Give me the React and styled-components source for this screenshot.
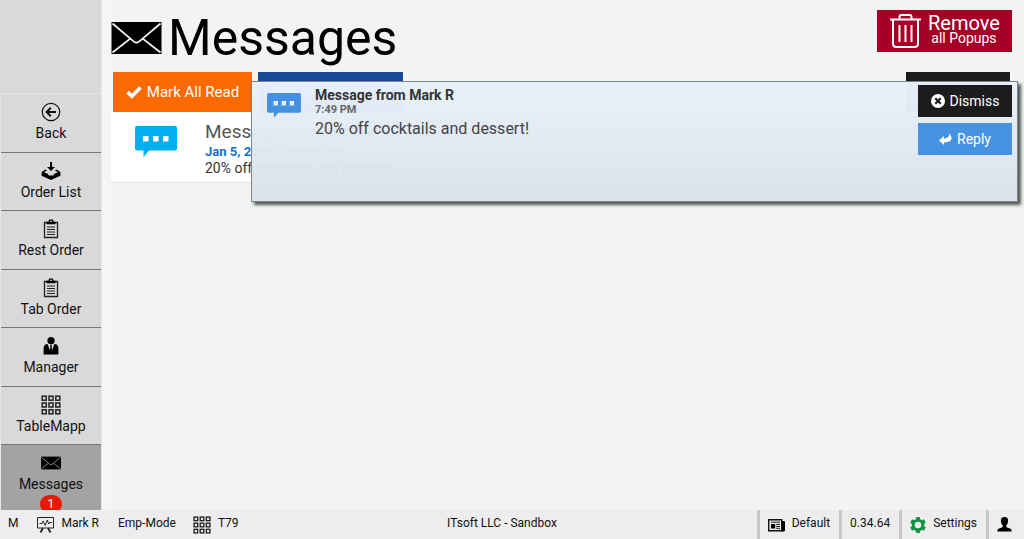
import React from 'react';
import styled, { createGlobalStyle } from 'styled-components';

const GlobalStyle = createGlobalStyle`
  * {
    box-sizing: border-box;
  }
  body {
    margin: 0;
    background: #f2f4f3;
    color: #111;
    font-family: Roboto, "Liberation Sans", sans-serif;
  }
  button {
    border: 0;
    padding: 0;
    font-family: inherit;
    cursor: pointer;
  }
`;

const Page = styled.div`
  display: grid;
  grid-template-columns: 102px minmax(0, 1fr);
  grid-template-rows: minmax(0, 1fr) 29px;
  height: 100vh;
  overflow: hidden;
`;

const Sidebar = styled.aside`
  display: grid;
  grid-template-rows: 93px minmax(0, 1fr);
  background: #d9d9d9;
  border-right: 1px solid #e6e6e6;
  overflow: hidden;
`;

const Nav = styled.nav`
  display: grid;
  grid-template-rows: repeat(6, minmax(0, 1fr)) 65px;
  border-top: 1px solid #e6e6e6;
  border-left: 1px solid #e6e6e6;
  overflow: hidden;
`;

const NavItem = styled.a`
  display: flex;
  flex-direction: column;
  align-items: center;
  gap: 2px;
  padding-top: 8px;
  border-bottom: 1px solid #777;
  color: #111;
  font-size: 14px;
  line-height: 18px;
  text-decoration: none;
  overflow: hidden;
  svg {
    flex: none;
  }
  ${({ $active }) => $active && `
    background: #a3a3a3;
    border-bottom: 0;
  `}
`;

const Badge = styled.span`
  flex: none;
  width: 22px;
  height: 18px;
  border-radius: 9px;
  background: #e8190a;
  color: #fff;
  font-size: 13px;
  line-height: 17px;
  text-align: center;
`;

const Main = styled.main`
  position: relative;
  padding: 10px 12px 0 9px;
  background: linear-gradient(90deg, #f5f6f6, #f2f4f3 12px);
`;

const Header = styled.header`
  display: flex;
  justify-content: space-between;
  align-items: flex-start;
  height: 62px;
`;

const Title = styled.h1`
  display: flex;
  align-items: center;
  gap: 6px;
  margin: 0;
  color: #000;
  font-size: 50px;
  font-weight: 400;
  line-height: 56px;
`;

const RemoveButton = styled.button`
  display: flex;
  align-items: center;
  gap: 7px;
  width: 135px;
  height: 42px;
  padding-left: 13px;
  background: #a50026;
  color: #fff;
`;

const RemoveLabel = styled.span`
  display: flex;
  flex-direction: column;
  align-items: center;
  padding-bottom: 6px;
  font-size: 14px;
  line-height: 10px;
`;

const RemoveTitle = styled.span`
  font-size: 20px;
  line-height: 20px;
`;

const Toolbar = styled.div`
  display: flex;
  gap: 6px;
  padding: 0 2px;
`;

const ToolButton = styled.button`
  display: flex;
  align-items: center;
  justify-content: center;
  gap: 5px;
  width: ${({ $width }) => $width}px;
  height: 40px;
  background: ${({ $color }) => $color};
  color: #fff;
  font-size: 15px;
  &:last-child {
    margin-left: auto;
  }
`;

const Card = styled.article`
  display: flex;
  gap: 28px;
  padding: 8px 24px 5px;
  background: #fff;
  border-bottom: 1px solid #e4e4e4;
  svg {
    margin-top: 6px;
  }
`;

const CardTitle = styled.h2`
  margin: 0;
  color: #555;
  font-size: 19px;
  font-weight: 400;
  line-height: 23px;
`;

const CardDate = styled.div`
  color: #1272ce;
  font-size: 13px;
  font-weight: 700;
  line-height: 17px;
`;

const CardText = styled.p`
  margin: 0;
  color: #333;
  font-size: 14px;
  line-height: 17px;
`;

const Popup = styled.section`
  position: absolute;
  top: 81px;
  right: 6px;
  left: 149px;
  display: flex;
  gap: 14px;
  min-height: 121px;
  padding: 3px 5px 0 15px;
  border: 1px solid #7c858a;
  background: linear-gradient(rgba(233, 242, 252, 0.98), rgba(217, 225, 234, 0.98));
  box-shadow: 3px 3px 3px rgba(0, 0, 0, 0.65);
  > svg {
    margin-top: 8px;
  }
`;

const PopupBody = styled.div`
  flex: 1;
  color: #444;
`;

const PopupTitle = styled.h3`
  margin: 2px 0 0;
  color: #333;
  font-size: 14px;
  line-height: 16px;
`;

const PopupTime = styled.div`
  color: #666;
  font-size: 11px;
  font-weight: 700;
  line-height: 14px;
`;

const PopupText = styled.p`
  margin: 0;
  font-size: 16px;
  line-height: 23px;
`;

const PopupActions = styled.div`
  display: flex;
  flex-direction: column;
  gap: 6px;
`;

const ActionButton = styled.button`
  display: flex;
  align-items: center;
  justify-content: center;
  gap: 5px;
  width: 94px;
  height: 32px;
  background: ${({ $color }) => $color};
  color: #fff;
  font-size: 14px;
`;

const StatusBar = styled.footer`
  grid-column: 1 / -1;
  display: flex;
  justify-content: space-between;
  background: #ededed;
  font-size: 12px;
  line-height: 27px;
`;

const StatusGroup = styled.div`
  display: flex;
  flex: ${({ $grow }) => ($grow ? '1 1 0' : 'none')};
  justify-content: ${({ $end }) => ($end ? 'flex-end' : 'flex-start')};
`;

const StatusTitle = styled(StatusGroup)`
  padding-right: 20px;
`;

const StatusItem = styled.span`
  display: flex;
  gap: 7px;
  padding-left: ${({ $left }) => $left || 0}px;
  white-space: nowrap;
  svg {
    align-self: center;
  }
`;

const StatusCell = styled(StatusItem)`
  padding: 0 9px 0 8px;
  border-left: 3px solid #c9c9c9;
  &:last-child {
    padding-right: 12px;
  }
`;

const BackIcon = () => (
  <svg width="20" height="20" viewBox="0 0 20 20" fill="none" stroke="#111">
    <circle cx="10" cy="10" r="8.7" strokeWidth="1.2" />
    <path d="M15 10H6M9.8 5.8 5.6 10l4.2 4.2" strokeWidth="2" />
  </svg>
);

const InboxIcon = () => (
  <svg width="20" height="20" viewBox="0 0 20 20">
    <path d="M9 1h2v5h3l-4 4-4-4h3z" />
    <path d="M4.6 8.4.6 11v3.7L10 19l9.4-4.3V11l-4-2.6-1.4 1 3 1.9-3.7 1.4-1.2 1.8H7.9l-1.2-1.8L3 11.3l3-1.9z" />
  </svg>
);

const ClipboardIcon = () => (
  <svg width="20" height="20" viewBox="0 0 20 20">
    <path d="M3.5 3.5h13v15h-13z" fill="none" stroke="#222" strokeWidth="1.3" />
    <path d="M5.5 5.3V2.8h2.2V1.6Q7.7.6 8.7.6h2.6q1 0 1 1v1.2h2.2v2.5zM9 1.8v1.3h2V1.8z" fillRule="evenodd" />
    <path d="M6 8h8M6 10.5h8M6 13h8M6 15.5h8" stroke="#222" />
  </svg>
);

const ManagerIcon = () => (
  <svg width="20" height="20" viewBox="0 0 20 20">
    <circle cx="10" cy="4.7" r="3.6" />
    <path d="M2.6 18.5v-5.8Q2.6 8 6.6 8L9 14.5 9.4 10 8.9 8.8h2.2l-.5 1.2.4 4.5L13.4 8q4 0 4 4.7v5.8z" />
  </svg>
);

const GridIcon = ({ size = 20 }) => (
  <svg width={size} height={size} viewBox="0 0 20 20" fill="none" stroke="#222" strokeWidth="1.5">
    {[1.2, 8, 14.8].map(y => [1.2, 8, 14.8].map(x => (
      <rect key={`${x}-${y}`} x={x} y={y} width="4" height="4" />
    )))}
  </svg>
);

const MailIcon = ({ width = 20, height = 20, line = '#aaa' }) => (
  <svg width={width} height={height} viewBox="0 0 50 32">
    <rect width="50" height="32" />
    <path d="M1 1.5 22.4 19.6Q25 21.6 27.6 19.6L49 1.5M1 30.5l17.8-13.9M49 30.5 31.2 16.6" fill="none" stroke={line} strokeWidth="1.8" />
  </svg>
);

const ChatIcon = ({ width, color, dots }) => (
  <svg width={width} height={Math.round(width * 0.73)} viewBox="0 0 42 31">
    <path d="M2 0h38q2 0 2 2v20.5q0 2-2 2H14L8.5 31v-6.500H2q-2 0-2-2V2q0-2 2-2z" fill={color} />
    <path d="M8 10h5.500v5.500H8zM18 10h5.500v5.500H18zM28 10h5.500v5.500H28z" fill={dots} />
  </svg>
);

const TrashIcon = () => (
  <svg width="31" height="34" viewBox="0 0 31 34" fill="none" stroke="#fff" strokeWidth="2">
    <path d="M0 5.500h31M9.500 5V3q0-2 2-2h8q2 0 2 2v2" />
    <path d="M3 6v23.500Q3 33 6.500 33h18q3.500 0 3.500-3.500V6" />
    <path d="M9.500 11v17M15.500 11v17M21.500 11v17" />
  </svg>
);

const CheckIcon = () => (
  <svg width="16" height="14" viewBox="0 0 16 14" fill="none" stroke="#fff" strokeWidth="3.6">
    <path d="M1.500 7.200 5.900 11.200 14.500 2.500" />
  </svg>
);

const DismissIcon = () => (
  <svg width="14" height="14" viewBox="0 0 14 14">
    <circle cx="7" cy="7" r="7" fill="#fff" />
    <path d="m4.300 4.300 5.400 5.400m0-5.400-5.400 5.400" stroke="#1c1c1c" strokeWidth="2.2" />
  </svg>
);

const ReplyIcon = () => (
  <svg width="13" height="13" viewBox="0 0 13 13" fill="#fff">
    <path d="M0 7.500 5 3v2.700q5-.2 5.500-5.200Q16.500 8.700 5 9.400V12z" />
  </svg>
);

const EditIcon = () => (
  <svg width="15" height="15" viewBox="0 0 15 15" fill="none" stroke="#fff" strokeWidth="2">
    <path d="M8 3H2v10h10V9M6 9l7-7" />
  </svg>
);

const FlagIcon = () => (
  <svg width="15" height="15" viewBox="0 0 15 15" fill="#fff">
    <path d="M1 0h2v15H1zM4 2q3-2 5 0t5 0v7q-3 2-5 0T4 9z" />
  </svg>
);

const MonitorIcon = () => (
  <svg width="17" height="17" viewBox="0 0 17 17" fill="none" stroke="#222">
    <path d="M.5 1.500h16v10.500H.5z" />
    <path d="M2.500 7.500H5l1.200-2.500 2 4.500L10.300 4l1.400 4 1-1.500h2" />
    <path d="m6 12-2.500 4.500M11 12l2.500 4.500" strokeWidth="1.8" />
  </svg>
);

const NewsIcon = () => (
  <svg width="17" height="14" viewBox="0 0 17 14">
    <path d="M.7 1.700h13v11H.7z" fill="none" stroke="#111" strokeWidth="1.4" />
    <path d="M14 3h2q1 0 1 1v8q0 1.500-1.500 1.500H13V12h1zM3 6h4.200v4.500H3z" />
    <path d="M3 4.200h9M8.200 6.500H12M8.200 8.500H12M8.200 10.300H12" stroke="#111" />
  </svg>
);

const GearIcon = () => (
  <svg width="16" height="16" viewBox="0 0 16 16">
    <circle cx="8" cy="8" r="4.8" fill="none" stroke="#139444" strokeWidth="3" />
    <path
      d="M8 0v3M8 13v3M1.100 4l2.600 1.500M12.300 10.500l2.600 1.500M1.100 12l2.600-1.500M12.300 5.500 14.900 4"
      stroke="#139444"
      strokeWidth="3.8"
    />
  </svg>
);

const UserIcon = () => (
  <svg width="15" height="15" viewBox="0 0 15 15">
    <path d="M7.500 0q3.800 0 3.600 4Q11 7 9.200 8.500q-.2 1.500.8 1.900l3.500 1.400q1.200.6 1.200 2.700H.3q0-2.100 1.200-2.700L5 10.400q1-.4.8-1.900Q4 7 3.900 4 3.700 0 7.500 0z" />
  </svg>
);

const links = [
  { label: 'Back', icon: <BackIcon /> },
  { label: 'Order List', icon: <InboxIcon /> },
  { label: 'Rest Order', icon: <ClipboardIcon /> },
  { label: 'Tab Order', icon: <ClipboardIcon /> },
  { label: 'Manager', icon: <ManagerIcon /> },
  { label: 'TableMapp', icon: <GridIcon /> },
  { label: 'Messages', icon: <MailIcon />, active: true, count: 1 },
];

const App = () => (
  <>
    <GlobalStyle />
    <Page>
      <Sidebar>
        <div />
        <Nav>
          {links.map(({ label, icon, active, count }) => (
            <NavItem key={label} href="#" $active={active}>
              {icon}
              <span>{label}</span>
              {count && <Badge>{count}</Badge>}
            </NavItem>
          ))}
        </Nav>
      </Sidebar>
      <Main>
        <Header>
          <Title>
            <MailIcon width={51} height={32} line="#f2f4f3" />
            Messages
          </Title>
          <RemoveButton>
            <TrashIcon />
            <RemoveLabel>
              <RemoveTitle>Remove</RemoveTitle>
              all Popups
            </RemoveLabel>
          </RemoveButton>
        </Header>
        <Toolbar>
          <ToolButton $width={139} $color="#fb6a02"><CheckIcon />Mark All Read</ToolButton>
          <ToolButton $width={145} $color="#174997"><EditIcon />Send Message</ToolButton>
          <ToolButton $width={104} $color="#1c1c1c"><FlagIcon />Show All</ToolButton>
        </Toolbar>
        <Card>
          <ChatIcon width={42} color="#00aff0" dots="#fff" />
          <div>
            <CardTitle>Message from Mark R</CardTitle>
            <CardDate>Jan 5, 2018 7:49:44 PM</CardDate>
            <CardText>20% off cocktails and dessert!</CardText>
          </div>
        </Card>
        <Popup>
          <ChatIcon width={34} color="#4391e0" dots="#e7f0fa" />
          <PopupBody>
            <PopupTitle>Message from Mark R</PopupTitle>
            <PopupTime>7:49 PM</PopupTime>
            <PopupText>20% off cocktails and dessert!</PopupText>
          </PopupBody>
          <PopupActions>
            <ActionButton $color="#1c1c1c"><DismissIcon />Dismiss</ActionButton>
            <ActionButton $color="#4793e2"><ReplyIcon />Reply</ActionButton>
          </PopupActions>
        </Popup>
      </Main>
      <StatusBar>
        <StatusGroup $grow>
          <StatusItem $left={8}>M</StatusItem>
          <StatusItem $left={19}><MonitorIcon />Mark R</StatusItem>
          <StatusItem $left={19}>Emp-Mode</StatusItem>
          <StatusItem $left={17}><GridIcon size={18} />T79</StatusItem>
        </StatusGroup>
        <StatusTitle>ITsoft LLC - Sandbox</StatusTitle>
        <StatusGroup $grow $end>
          <StatusCell><NewsIcon />Default</StatusCell>
          <StatusCell>0.34.64</StatusCell>
          <StatusCell><GearIcon />Settings</StatusCell>
          <StatusCell><UserIcon /></StatusCell>
        </StatusGroup>
      </StatusBar>
    </Page>
  </>
);

export default App;
